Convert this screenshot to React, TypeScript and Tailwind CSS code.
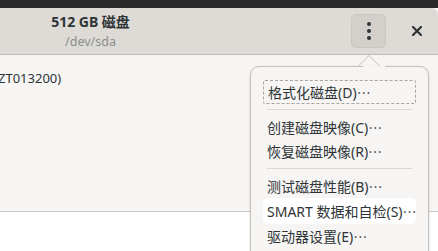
import { useState } from 'react';

const font = { fontFamily: '"Noto Sans", "Noto Sans CJK SC", sans-serif' };
const cjk = { fontFamily: '"Noto Sans CJK SC", sans-serif' };

type Entry = { label: string; sep?: boolean; focus?: boolean; hover?: boolean };

const entries: Entry[] = [
  { label: '格式化磁盘(D)', focus: true },
  { label: '', sep: true },
  { label: '创建磁盘映像(C)' },
  { label: '恢复磁盘映像(R)' },
  { label: '', sep: true },
  { label: '测试磁盘性能(B)' },
  { label: 'SMART 数据和自检(S)', hover: true },
  { label: '驱动器设置(E)' },
];

export default function App() {
  const [open] = useState(true);

  return (
    <div
      className="relative w-[438px] h-[251px] overflow-hidden bg-white text-[#2e3436]"
      style={font}
    >
      <div className="h-[8px] bg-[#2a2a2a]" />

      {/* header bar */}
      <div className="h-[47px] bg-[#dedbd7] border-b border-[#c0bcb7] rounded-tr-[6px] flex items-center">
        <div className="w-[181px] flex flex-col items-center leading-none">
          <span className="text-[14px] font-bold text-[#2e3436] mt-[1px]">512 GB 磁盘</span>
          <span className="text-[12.5px] text-[#8a8d8e] mt-[7px]">/dev/sda</span>
        </div>
        <div className="flex-1" />
        <button className="w-[35px] h-[34px] rounded-[5px] bg-[#d3cfca] border border-[#cbc6c1] flex flex-col items-center justify-center gap-[3px]">
          <span className="w-[4px] h-[4px] rounded-full bg-[#2e3436]" />
          <span className="w-[4px] h-[4px] rounded-full bg-[#2e3436]" />
          <span className="w-[4px] h-[4px] rounded-full bg-[#2e3436]" />
        </button>
        <div className="w-[52px] flex items-center pl-[26px]">
          <svg width="10" height="10" viewBox="0 0 10 10">
            <path d="M1 1L9 9M9 1L1 9" stroke="#2e3436" strokeWidth="2.2" strokeLinecap="square" />
          </svg>
        </div>
      </div>

      {/* content */}
      <div className="h-[157px] bg-[#f6f5f4] border-b border-[#cdc7c2] pt-[13px]">
        <div className="text-[13px] leading-[20px] text-[#2e3436] ml-[-2px]">ZT013200)</div>
      </div>

      {open && (
        <>
          {/* arrow */}
          <svg className="absolute left-[357px] top-[54px]" width="24" height="14" viewBox="0 0 24 14">
            <path d="M0 13.5L12 1.5L24 13.5" fill="#f6f5f4" stroke="#c4c0bb" strokeWidth="1" />
          </svg>
          <div className="absolute left-[250px] top-[66px] w-[179px] h-[200px] bg-[#f6f5f4] border border-[#c4c0bb] rounded-[9px] shadow-[0_1px_3px_rgba(0,0,0,0.12)] px-[12px] pt-[13px]">
            <div className="absolute left-[112px] top-[-1px] w-[22px] h-[2px] bg-[#f6f5f4]" />
            {entries.map((e, i) =>
              e.sep ? (
                <div key={i} className="h-px bg-[#dcd8d4] mx-[4px] my-[5px]" />
              ) : (
                <div
                  key={i}
                  className={
                    'h-[24px] flex items-center px-[4px] text-[14px] text-[#2e3436] whitespace-nowrap ' +
                    (e.focus ? 'border border-dashed border-[#a8a6a3] rounded-[2px] ' : '') +
                    (e.hover ? 'bg-white rounded-[5px] h-[26px] ' : ' ')
                  }
                >
                  {e.label}
                  <span style={cjk}>…</span>
                </div>
              )
            )}
          </div>
        </>
      )}
    </div>
  );
}
